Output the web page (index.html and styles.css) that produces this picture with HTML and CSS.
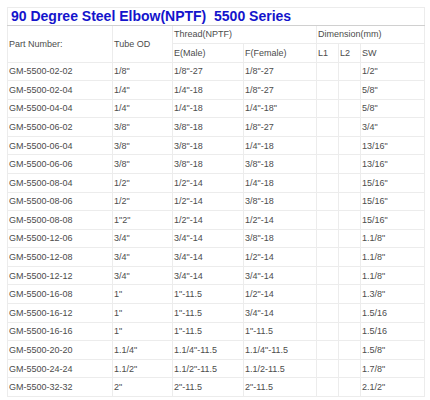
FILE: index.html
```html
<!DOCTYPE html>
<html>
<head>
<meta charset="utf-8">
<link rel="stylesheet" href="styles.css">
</head>
<body>
<table class="spec">
  <colgroup>
    <col class="c-part"><col class="c-od"><col class="c-e"><col class="c-f"><col class="c-l"><col class="c-l"><col class="c-sw">
  </colgroup>
  <tr class="title-row"><td colspan="7" class="title">90 Degree Steel Elbow(NPTF)&nbsp; 5500 Series</td></tr>
  <tr class="head"><td rowspan="2">Part Number:</td><td rowspan="2">Tube OD</td><td colspan="2">Thread(NPTF)</td><td colspan="3">Dimension(mm)</td></tr>
  <tr class="head"><td>E(Male)</td><td>F(Female)</td><td>L1</td><td>L2</td><td>SW</td></tr>
  <tr><td>GM-5500-02-02</td><td>1/8"</td><td>1/8"-27</td><td>1/8"-27</td><td></td><td></td><td>1/2"</td></tr>
  <tr><td>GM-5500-02-04</td><td>1/4"</td><td>1/4"-18</td><td>1/8"-27</td><td></td><td></td><td>5/8"</td></tr>
  <tr><td>GM-5500-04-04</td><td>1/4"</td><td>1/4"-18</td><td>1/4"-18"</td><td></td><td></td><td>5/8"</td></tr>
  <tr><td>GM-5500-06-02</td><td>3/8"</td><td>3/8"-18</td><td>1/8"-27</td><td></td><td></td><td>3/4"</td></tr>
  <tr><td>GM-5500-06-04</td><td>3/8"</td><td>3/8"-18</td><td>1/4"-18</td><td></td><td></td><td>13/16"</td></tr>
  <tr><td>GM-5500-06-06</td><td>3/8"</td><td>3/8"-18</td><td>3/8"-18</td><td></td><td></td><td>13/16"</td></tr>
  <tr><td>GM-5500-08-04</td><td>1/2"</td><td>1/2"-14</td><td>1/4"-18</td><td></td><td></td><td>15/16"</td></tr>
  <tr><td>GM-5500-08-06</td><td>1/2"</td><td>1/2"-14</td><td>3/8"-18</td><td></td><td></td><td>15/16"</td></tr>
  <tr><td>GM-5500-08-08</td><td>1"2"</td><td>1/2"-14</td><td>1/2"-14</td><td></td><td></td><td>15/16"</td></tr>
  <tr><td>GM-5500-12-06</td><td>3/4"</td><td>3/4"-14</td><td>3/8"-18</td><td></td><td></td><td>1.1/8"</td></tr>
  <tr><td>GM-5500-12-08</td><td>3/4"</td><td>3/4"-14</td><td>1/2"-14</td><td></td><td></td><td>1.1/8"</td></tr>
  <tr><td>GM-5500-12-12</td><td>3/4"</td><td>3/4"-14</td><td>3/4"-14</td><td></td><td></td><td>1.1/8"</td></tr>
  <tr><td>GM-5500-16-08</td><td>1"</td><td>1"-11.5</td><td>1/2"-14</td><td></td><td></td><td>1.3/8"</td></tr>
  <tr><td>GM-5500-16-12</td><td>1"</td><td>1"-11.5</td><td>3/4"-14</td><td></td><td></td><td>1.5/16</td></tr>
  <tr><td>GM-5500-16-16</td><td>1"</td><td>1"-11.5</td><td>1"-11.5</td><td></td><td></td><td>1.5/16</td></tr>
  <tr><td>GM-5500-20-20</td><td>1.1/4"</td><td>1.1/4"-11.5</td><td>1.1/4"-11.5</td><td></td><td></td><td>1.5/8"</td></tr>
  <tr><td>GM-5500-24-24</td><td>1.1/2"</td><td>1.1/2"-11.5</td><td>1.1/2-11.5</td><td></td><td></td><td>1.7/8"</td></tr>
  <tr><td>GM-5500-32-32</td><td>2"</td><td>2"-11.5</td><td>2"-11.5</td><td></td><td></td><td>2.1/2"</td></tr>
</table>
</body>
</html>
```

FILE: styles.css
```css
html, body {
  margin: 0;
  padding: 0;
  background: #ffffff;
}

body {
  padding: 7px 0 0 7px;
}

.spec {
  border-collapse: collapse;
  table-layout: fixed;
  width: 417px;
  font-family: "Liberation Sans", Arial, sans-serif;
  font-size: 9px;
  color: #4c4c4c;
  border-left: 1px solid #c4c4c4;
  border-top: 1px solid #c8c8c8;
  border-right: 1px solid #e0e0e0;
  border-bottom: 1px solid #e6e6e6;
}

.c-part { width: 105px; }
.c-od { width: 60px; }
.c-e { width: 71px; }
.c-f { width: 73px; }
.c-l { width: 22px; }
.c-sw { width: 64px; }

.spec td {
  border: 1px solid #ececec;
  padding: 0 0 0 1px;
  height: 18.58px;
  text-align: left;
  vertical-align: middle;
  white-space: nowrap;
  overflow: hidden;
  box-sizing: border-box;
}

.spec tr.head td {
  height: 18.5px;
}

.spec tr.title-row td {
  height: 17.5px;
  border-bottom: 1px solid #d0d0d0;
}

.spec td.title {
  font-size: 14px;
  font-weight: bold;
  color: #1414cc;
  padding-left: 3px;
  padding-top: 0;
}
```
